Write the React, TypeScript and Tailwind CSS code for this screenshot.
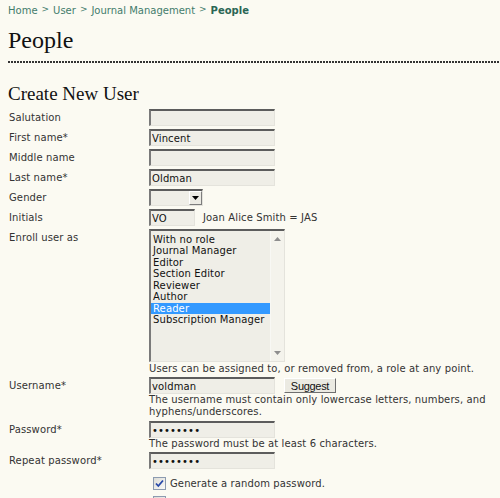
import React from 'react';

const inputCls =
  "block h-[17px] border-t-2 border-l-2 border-r border-b border-t-[#5c5c5c] border-l-[#7a7a7a] border-r-[#e4e3dc] border-b-[#e4e3dc] bg-[#efeee7] px-[1px] text-[10px] leading-[13px] tracking-[0.12px] text-[#111] outline-none font-['DejaVu_Sans',Verdana,sans-serif]";

const roles = [
  'With no role',
  'Journal Manager',
  'Editor',
  'Section Editor',
  'Reviewer',
  'Author',
  'Reader',
  'Subscription Manager',
];

const Label = ({ children, h = 'h-[20px]' }: { children: React.ReactNode; h?: string }) => (
  <div className={`${h} pl-[1px] text-[10px] leading-[17px] text-[#333]`}>{children}</div>
);

const Check = ({ checked }: { checked?: boolean }) => (
  <div className="flex h-[13px] w-[13px] items-center justify-center border border-[#8c9bb0] bg-[linear-gradient(135deg,#dcdcd6,#fafaf8)]">
    {checked && (
      <svg width="9" height="9" viewBox="0 0 9 9">
        <path d="M1 4.5 L3.3 7 L8 1.5" fill="none" stroke="#2748a8" strokeWidth="1.8" />
      </svg>
    )}
  </div>
);

export default function App() {
  return (
    <div className="h-[498px] w-[500px] overflow-hidden bg-[#fbfaf2] pl-[8px] tracking-[0.12px] font-['DejaVu_Sans',Verdana,sans-serif]">
      {/* Breadcrumb */}
      <div className="flex h-[20px] items-center text-[10px] tracking-normal text-[#437c6c]">
        <span>Home</span>
        <span className="mx-[4px] text-[9px]">&gt;</span>
        <span>User</span>
        <span className="mx-[4px] text-[9px]">&gt;</span>
        <span>Journal Management</span>
        <span className="mx-[4px] text-[9px]">&gt;</span>
        <span className="font-bold text-[#2b6655]">People</span>
      </div>

      <div className="flex h-[40px] items-center font-['Liberation_Serif',Georgia,serif] text-[24px] tracking-normal text-[#111]">
        People
      </div>
      <div className="mt-[1px] h-[2px] bg-[linear-gradient(to_right,#333_2px,transparent_2px)] bg-[length:3px_2px]" />

      <h2 className="mt-[20px] h-[22px] font-['Liberation_Serif',Georgia,serif] text-[19px] leading-[22px] tracking-normal text-[#111]">
        Create New User
      </h2>

      <div className="mt-[4px] grid grid-cols-[141px_1fr]">
        <Label>Salutation</Label>
        <div className="h-[20px]"><input className={`${inputCls} w-[126px]`} defaultValue="" /></div>

        <Label>First name*</Label>
        <div className="h-[20px]"><input className={`${inputCls} w-[126px]`} defaultValue="Vincent" /></div>

        <Label>Middle name</Label>
        <div className="h-[20px]"><input className={`${inputCls} w-[126px]`} defaultValue="" /></div>

        <Label>Last name*</Label>
        <div className="h-[20px]"><input className={`${inputCls} w-[126px]`} defaultValue="Oldman" /></div>

        <Label>Gender</Label>
        <div className="h-[20px]">
          <div className="flex h-[17px] w-[54px] items-start justify-end border-t-2 border-l-2 border-r border-b border-t-[#5c5c5c] border-l-[#7a7a7a] border-r-[#e4e3dc] border-b-[#e4e3dc] bg-[#efeee7]">
            <div className="flex h-[14px] w-[13px] items-center justify-center border border-t-white border-l-white border-r-[#7d7d7d] border-b-[#7d7d7d] bg-[#ecebe4]">
              <svg width="7" height="4" viewBox="0 0 7 4">
                <path d="M0 0 H7 L3.5 4 Z" fill="#000" />
              </svg>
            </div>
          </div>
        </div>

        <Label>Initials</Label>
        <div className="flex h-[20px] items-start">
          <input className={`${inputCls} w-[46px]`} defaultValue="VO" />
          <span className="ml-[8px] text-[10px] leading-[17px] text-[#333]">Joan Alice Smith = JAS</span>
        </div>

        <Label h="h-[134px]">Enroll user as</Label>
        <div className="h-[134px]">
          <div className="flex h-[133px] w-[136px] border-t-2 border-l-2 border-r border-b border-t-[#5c5c5c] border-l-[#7a7a7a] border-r-[#e4e3dc] border-b-[#e4e3dc] bg-[#efeee7]">
            <div className="flex-1 pt-[3px] text-[10px] leading-[11.45px] text-[#111]">
              {roles.map((r) => (
                <div
                  key={r}
                  className={r === 'Reader' ? 'bg-[#3399ff] pl-[2px] text-white' : 'pl-[2px]'}
                >
                  {r}
                </div>
              ))}
            </div>
            <div className="flex w-[14px] flex-col items-center justify-between border-l border-[#f8f8f4] bg-[#f4f3ec] py-[6px]">
              <svg width="7" height="4" viewBox="0 0 7 4">
                <path d="M0 4 H7 L3.5 0 Z" fill="#8e8e8e" />
              </svg>
              <svg width="7" height="4" viewBox="0 0 7 4">
                <path d="M0 0 H7 L3.5 4 Z" fill="#8e8e8e" />
              </svg>
            </div>
          </div>
        </div>

        <div className="h-[14px]" />
        <div className="h-[14px] text-[10px] leading-[12px] text-[#333]">
          Users can be assigned to, or removed from, a role at any point.
        </div>

        <Label h="h-[17px]">Username*</Label>
        <div className="flex h-[17px] items-start">
          <input className={`${inputCls} w-[126px]`} defaultValue="voldman" />
          <button className="ml-[9px] mt-[1px] h-[15px] w-[52px] border border-t-white border-l-white border-r-[#6f6f6f] border-b-[#6f6f6f] bg-[#ebeae2] font-['Liberation_Sans',Arial,sans-serif] text-[11px] leading-[12px] tracking-[-0.3px] text-[#111]">
            Suggest
          </button>
        </div>

        <div className="h-[27px]" />
        <div className="h-[27px] text-[10px] leading-[12px] text-[#333]">
          The username must contain only lowercase letters, numbers, and hyphens/underscores.
        </div>

        <Label h="h-[17px]">Password*</Label>
        <div className="h-[17px]">
          <input type="password" className={`${inputCls} w-[126px]`} defaultValue="12345678" />
        </div>

        <div className="h-[14px]" />
        <div className="h-[14px] text-[10px] leading-[12px] text-[#333]">
          The password must be at least 6 characters.
        </div>

        <Label h="h-[17px]">Repeat password*</Label>
        <div className="h-[17px]">
          <input type="password" className={`${inputCls} w-[126px]`} defaultValue="12345678" />
        </div>

        <div />
        <div className="mt-[7px] flex items-center pl-[4px]">
          <Check checked />
          <span className="ml-[4px] text-[10px] text-[#333]">Generate a random password.</span>
        </div>

        <div />
        <div className="mt-[5px] flex items-center pl-[4px]">
          <Check />
        </div>
      </div>
    </div>
  );
}
